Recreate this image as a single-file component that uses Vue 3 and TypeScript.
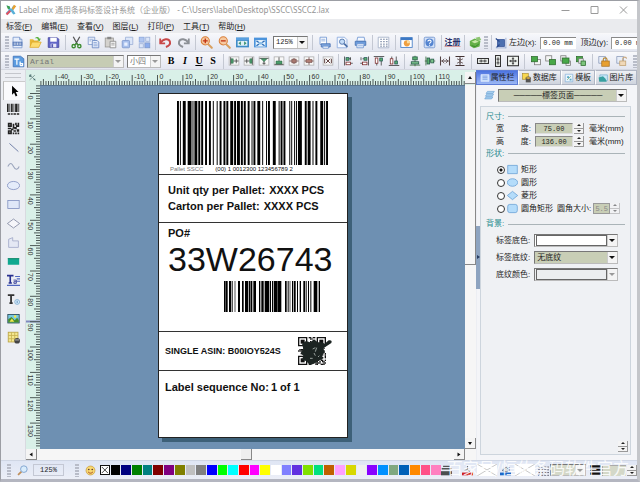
<script setup lang="ts">
import { ref } from 'vue'

type Tool = { id: string; label: string }

const frame = '<rect x="1.5" y="2.5" width="13" height="11" fill="#f8f8f8" stroke="#aaa"/>'
const lens = (sign: string) =>
  `<path d="M10 10l4.500 4.500" stroke="#d8a060" stroke-width="2.600" stroke-linecap="round"/><circle cx="6.500" cy="6" r="5" fill="#f6c9a0" stroke="#d9803c" stroke-width="1.300"/><path d="${sign}" stroke="#c03010" stroke-width="1.600" fill="none"/>`
const layers = (a: string, b: string, ax: number, bx: number) =>
  `<rect x="${ax}" y="${ax}" width="8" height="7" fill="${a}" stroke="#777"/><rect x="${bx}" y="${bx}" width="8" height="7" fill="${b}" stroke="#2c6a2c"/>`

const icons: Record<string, string> = {
  logo: '<path d="M2 2l4 1 2 4 3-5 3 1-3 5 3 5-3 1-3-4-4 4-3-2 4-4z" fill="#58b0d8"/><path d="M9 6l3-5 3 2-4 5z" fill="#e8a030"/><path d="M1 13l5-5 2 2-5 5z" fill="#e05060"/><path d="M2 2l4 1 1 3-3 1z" fill="#40a050"/>',
  doc: '<path d="M2.500 1.500h8l3 3v10h-11z" fill="#e6eefc" stroke="#7a98cc"/><path d="M10.500 1.500v3h3" fill="none" stroke="#7a98cc"/><path d="M2 7h12v5H2z" fill="#5578b8"/><path d="M4 8v3M6 8v3M8 8v3M10 8v3M12 8v3" stroke="#fff" stroke-width=".8"/>',
  open: '<path d="M1 13V4h4l1.500 1.500H12V8z" fill="#e8b838"/><path d="M3.500 7.500H15L12 14H1z" fill="#fcdc70" stroke="#d8a020" stroke-width=".8"/><path d="M7 3c2-2.500 5-2 6 .5l1.500-.5-1.500 3.500L10 5l1.300-.6C10.500 3 9 2.500 7 3z" fill="#5cb040"/>',
  save: '<path d="M1.500 2h11l2 2v10h-13z" fill="#6266c8" stroke="#4448a0"/><rect x="4" y="2" width="8" height="5" fill="#fff"/><rect x="4.500" y="9.500" width="7" height="4.500" fill="#e8e8f8"/><rect x="5.500" y="10" width="2" height="4" fill="#5055b0"/>',
  cut: '<path d="M4 1l5 9M12 1L7 10" stroke="#555" stroke-width="1.500"/><circle cx="4.500" cy="12.500" r="2" fill="none" stroke="#3c8c30" stroke-width="1.700"/><circle cx="11.500" cy="12.500" r="2" fill="none" stroke="#3c8c30" stroke-width="1.700"/><path d="M6 11l2-2 2 2" stroke="#3c8c30" fill="none" stroke-width="1.500"/>',
  copy: '<path d="M1.500 1.500h8v9h-8z" fill="#f0f4fc" stroke="#7e98c8"/><path d="M6.500 5.500h6l2 2v7h-8z" fill="#e4ecfa" stroke="#6484c0"/><path d="M8 8h4M8 10h5M8 12h5M3 4h5M3 6h2" stroke="#8aa4d4"/>',
  paste: '<rect x="1.500" y="2.500" width="10" height="11" fill="#d4d2ce" stroke="#9a9894"/><rect x="4" y="1" width="5" height="3" fill="#888"/><path d="M7.500 6.500h7v8h-7z" fill="#f6f6f6" stroke="#888"/><path d="M9 9h4M9 11h4" stroke="#999"/>',
  stack: '<path d="M5.500 1.500h9v9h-9z" fill="#dce6f8" stroke="#9cb0d8"/><rect x="1.500" y="5.500" width="9" height="9" rx="1" fill="#a8c0ec" stroke="#7c98cc"/><rect x="4" y="8" width="4" height="4" fill="#e8f0ff"/>',
  tiles: '<rect x="1.500" y="1.500" width="6" height="6" fill="#b0c6f0" stroke="#8aa6dc"/><rect x="9.500" y="1.500" width="5" height="5" fill="#dce6f8" stroke="#9cb0d8"/><rect x="1.500" y="9.500" width="5" height="5" fill="#dce6f8" stroke="#9cb0d8"/><rect x="8.500" y="8.500" width="6" height="6" fill="#8cacec" stroke="#7c98cc"/>',
  undo: '<path d="M1.500 3v6h6" fill="none" stroke="#c84848" stroke-width="2.200"/><path d="M2 8.500C5 3 12 2.500 13.500 7c.8 3.500-2 5.500-5 6.500" fill="none" stroke="#c84848" stroke-width="2.400"/>',
  redo: '<path d="M14.500 3v6h-6" fill="none" stroke="#8c9096" stroke-width="2.200"/><path d="M14 8.500C11 3 4 2.500 2.500 7c-.8 3.500 2 5.500 5 6.500" fill="none" stroke="#8c9096" stroke-width="2.400"/>',
  zoomin: lens('M3.500 6h6M6.500 3v6'),
  zoomout: lens('M3.500 6h6'),
  fitw: '<rect x="0" y="2" width="16" height="12" fill="#3e8cc8"/><path d="M0 2h16v3H0z" fill="#5aa0e0"/><rect x="2" y="6" width="12" height="6" fill="#dff0f4"/><path d="M3 9l3-2.500v5zM13 9l-3-2.500v5z" fill="#3a9070"/>',
  fitall: '<rect x="0" y="2" width="16" height="12" fill="#4c94dc"/><rect x="2" y="5" width="12" height="8" fill="#e8f4fc"/><path d="M3 6l3 2M13 6l-3 2M3 12l3-2M13 12l-3-2" stroke="#2c6cb8" stroke-width="1.500"/><rect x="6" y="7.500" width="4" height="3" fill="#88bce8"/>',
  pagesetup: '<path d="M2.500 1.500h8v9h-8z" fill="#fff" stroke="#6c94d0"/><path d="M4 4h5M4 6h5" stroke="#88a8dc"/><path d="M4 9.500h11v4H4z" fill="#7ca4dc" stroke="#4a74b4"/><path d="M6 12.500h7v2.500H6z" fill="#fff" stroke="#6c94d0"/>',
  preview: '<path d="M1.500 1.500h9l3 3v10h-12z" fill="#f4f8ff" stroke="#88a8dc"/><circle cx="7.500" cy="7" r="3.200" fill="#c4dcf8" stroke="#5a7cb0" stroke-width="1.200"/><path d="M10 9.500l4 4" stroke="#4c70a8" stroke-width="2.200"/>',
  print: '<path d="M4.500 1.500h8l1 5h-10z" fill="#f4f8ff" stroke="#6c94d0"/><path d="M1.500 6.500h13v5h-13z" fill="#6c9cdc" stroke="#4470b0"/><path d="M3.500 9.500h9l-1 5h-8z" fill="#e8f0fc" stroke="#6c94d0"/><path d="M5 12h6" stroke="#88a8dc"/>',
  grid: '<path d="M1.500 1.500h13v13h-13z" fill="#fff" stroke="#a0acc4"/><path d="M4 4h2M7.500 4h2M11 4h2M4 7h2M7.500 7h2M11 7h2M4 10h2M7.500 10h2M11 10h2M4 12.500h2M7.500 12.500h2M11 12.500h2" stroke="#6c7c9c" stroke-width="1.200"/>',
  history: '<rect x="1" y="2" width="14" height="12" fill="#fff" stroke="#3c78c4"/><path d="M1 2h14v3H1z" fill="#3c78c4"/><circle cx="8.500" cy="9" r="3.800" fill="#f0a040"/><path d="M8.500 9V5.200A3.800 3.800 0 0 1 12.300 9z" fill="#f8dca0"/>',
  help: '<rect x="1.500" y="1.500" width="13" height="13" rx="1.500" fill="#d4e2f8" stroke="#6c90cc"/><circle cx="8" cy="8" r="5" fill="#5484d0"/><path d="M6 6.800C6 4.500 10 4.500 10 6.800 10 8.200 8 8 8 9.600M8 10.700v1.300" fill="none" stroke="#fff" stroke-width="1.300"/>',
  exit: '<path d="M1 6l6-3 7 3-1 7-7 2-5-3z" fill="#64b048"/><path d="M3 7l5-2 4 2-5 2z" fill="#c8e8a8"/><path d="M8 2l5-1 2 4-4 1z" fill="#8cc470"/><path d="M3 12l5 1 4-3" stroke="#2c7c24" fill="none"/>',
  anchor: '<rect x="3.500" y="3.500" width="9" height="9" fill="#4c70b0" stroke="#2c4c94"/><path d="M1 2l5 4M2 14l4-4" stroke="#28488c" stroke-width="1.500"/><path d="M14.500 1v14M1 14.500h14" stroke="#8ca4d0"/>',
  fontfile: '<path d="M1.500 1.500h9l4 3v10h-13z" fill="#5c9ce0" stroke="#3c70b8"/><path d="M3 5h6M6 5v7M10 8v5M10 10.500h3v2.500h-3" stroke="#fff" stroke-width="1.500" fill="none"/>',
  al: frame + '<path d="M3.500 3v10M7 8h7M11 5v6" stroke="#333"/><path d="M4 5h3v6H4z" fill="#4c9c6c" stroke="#286040" stroke-width=".6"/>',
  ar: frame + '<path d="M12.500 3v10M2 8h7M5 5v6" stroke="#333"/><path d="M9 5h3v6H9z" fill="#4c9c6c" stroke="#286040" stroke-width=".6"/>',
  at: frame + '<path d="M2 4.500h12M8 8v5M6 11h4" stroke="#333"/><path d="M4 5h8L8 9z" fill="#4c9c6c" stroke="#286040" stroke-width=".6"/>',
  ab: frame + '<path d="M2 12.500h12M8 3v6" stroke="#333"/><path d="M4 12V8h8v4z" fill="#4c9c6c" stroke="#286040" stroke-width=".6"/>',
  ac: frame + '<path d="M2 8h12M8 4v8" stroke="#633"/><path d="M5 5.500h6v5H5z" fill="#a87870" stroke="#533" stroke-width=".6"/>',
  am: frame + '<path d="M2 8h12M8 3v10" stroke="#633"/><path d="M4 6h8v4H4z" fill="#b07c74" stroke="#533" stroke-width=".6"/>',
  same: frame + '<path d="M3.500 5v6M12.500 5v6M5 5l6 6M11 5l-6 6" stroke="#533" stroke-width="1.200"/>',
  dl: '<path d="M2 2v12M4 5h6M4 11h9M10 3v4" stroke="#333"/><rect x="4" y="3.500" width="4" height="3.500" fill="#5cb070" stroke="#255"/><rect x="4" y="9.500" width="6" height="3.500" fill="#fff" stroke="#722"/>',
  dr: '<path d="M14 2v12M6 5h6M3 11h9M4 3v4" stroke="#333"/><rect x="8" y="3.500" width="4" height="3.500" fill="#5cb070" stroke="#255"/><rect x="6" y="9.500" width="6" height="3.500" fill="#fff" stroke="#722"/>',
  dt: '<path d="M1 2h14M5 10v4M11 8v6" stroke="#333"/><rect x="3" y="4" width="3.500" height="7" fill="#fff" stroke="#722"/><rect x="9" y="4" width="3.500" height="4" fill="#5cb070" stroke="#255"/>',
  db: '<path d="M1 14h14M5 2v4M11 2v6" stroke="#333"/><rect x="3" y="5" width="3.500" height="7" fill="#fff" stroke="#722"/><rect x="9" y="8" width="3.500" height="4" fill="#5cb070" stroke="#255"/>',
  cv: '<path d="M8 1v14M1 13.500h14" stroke="#363"/><rect x="5" y="2.500" width="6" height="4" fill="#5cb070" stroke="#254"/><rect x="3" y="9" width="10" height="3" fill="#7cc48c" stroke="#254"/>',
  ch: '<path d="M1 8h14M2.500 2v12" stroke="#363"/><rect x="4" y="4" width="3.500" height="8" fill="#5cb070" stroke="#254"/><rect x="9" y="5.500" width="4" height="5" fill="#7cc48c" stroke="#254"/>',
  sh: '<path d="M2 2v12M14 2v12M3 8h10" stroke="#544" stroke-width="1.400"/><path d="M7 5L4 8l3 3M9 5l3 3-3 3" fill="none" stroke="#544"/>',
  sv: '<path d="M2 2h12M2 14h12M8 3v10" stroke="#433" stroke-width="1.500"/><path d="M4 5l4 2 4-2M4 11l4-2 4 2" fill="none" stroke="#544"/>',
  ew: '<rect x="0.700" y="4.700" width="14.600" height="6.600" fill="#f0f4f0" stroke="#333" stroke-width="1.400"/><path d="M3 8h10M5.500 6v4M10.500 6v4" stroke="#333" stroke-width="1.200"/>',
  eh: '<rect x="4.700" y="0.700" width="6.600" height="14.600" fill="#f0f4f0" stroke="#333" stroke-width="1.400"/><path d="M8 3v10M6 5.500h4M6 10.500h4" stroke="#333" stroke-width="1.200"/>',
  eb: '<rect x="0.700" y="1.700" width="14.600" height="12.600" fill="#f0f4f0" stroke="#333" stroke-width="1.400"/><path d="M8 3v10M3 8h10M6.500 5h3M6.500 11h3M5 6.500v3M11 6.500v3" stroke="#333" stroke-width="1.200"/>',
  l1: layers('#f4f4f4', '#48a848', 6, 2),
  l2: layers('#f4f4f4', '#48a848', 1, 6),
  l3: '<rect x="1" y="1" width="7" height="7" fill="#eee" stroke="#777"/><rect x="8" y="8" width="6" height="6" fill="#eee" stroke="#777"/><rect x="3" y="4" width="9" height="7" fill="#48a848" stroke="#2c6a2c"/>',
  l4: '<rect x="2" y="2" width="8" height="7" fill="#48a848" stroke="#2c6a2c"/><rect x="5" y="5" width="6" height="6" fill="#eee" stroke="#777"/><rect x="8" y="8" width="6" height="6" fill="#7cc47c" stroke="#2c6a2c"/>',
  lock: '<path d="M1 2h9v9H1z" fill="#e8eef8" stroke="#8898b8"/><path d="M7 8V6c0-3 5-3 5 0v2" fill="none" stroke="#b88830" stroke-width="1.500"/><rect x="5" y="8" width="10" height="7" fill="#e8a030" stroke="#a87020"/>',
  unlock: '<path d="M1 2h9v9H1z" fill="#e8eef8" stroke="#8898b8"/><path d="M9 8V5c0-3 5-3 5 0" fill="none" stroke="#c8a880" stroke-width="1.500"/><rect x="5" y="8" width="8" height="6" fill="#f0d8b8" stroke="#c0a070"/>',
  pointer: '<path d="M5 1v11l2.500-2.500L9.500 14l2-1-2-4.500H13z" fill="#000"/>',
  barcode: '<path d="M0 1h2v10H0zM3 1h1v10H3zM5 1h2v10H5zM8 1h1v10H8zM10 1h3v10h-3zM14 1h1v10h-1z" fill="#222"/><path d="M1 13.500h3M5 13.500h2M8 13.500h3M12 13.500h3" stroke="#222" stroke-width="2"/>',
  qr: '<path d="M1 1h5v5H1zM10 1h2v3h-2zM13 1h2v5h-2zM1 10h5v5H1zM7 2h2v6H7zM9 6h3v3H9zM1 7h4v2H1zM8 10h3v2H8zM12 9h3v3h-3zM10 13h2v2h-2zM13 13h2v2h-2zM7 13h2v2H7zM11 4h2v2h-2zM5 8h3v2H5z" fill="#222"/><path d="M3 3h1v1H3zM3 12h1v1H3z" fill="#fff"/>',
  line: '<path d="M3 3l11 10" stroke="#7080a8" stroke-width="1.200"/>',
  curve: '<path d="M1 8c3-6 5-4 7 0s5 5 7 0" fill="none" stroke="#9aa4bc" stroke-width="1.300"/>',
  ellipse: '<ellipse cx="8" cy="8" rx="7.500" ry="5" fill="#e4ecfa" stroke="#8090c0"/>',
  rect: '<rect x="1" y="3" width="14" height="10" fill="#dfe7f8" stroke="#8090c0"/>',
  diamond: '<path d="M8 2.500L15.500 8 8 13.500.5 8z" fill="#f6f6fa" stroke="#8088a0"/>',
  polygon: '<path d="M2 4l5-2v4h7v8H2z" fill="#e4e8f4" stroke="#a0a8c8"/>',
  fill: '<rect x="1" y="4" width="14" height="8" fill="#10a890"/><path d="M1 4.500h14" stroke="#108060"/>',
  richtext: '<path d="M0 2h8M4 2v9M2 11h4" stroke="#283090" stroke-width="2" fill="none"/><path d="M8 7.500h3.500v4H8.500v-2h3" stroke="#283090" fill="none"/><path d="M10 3h6M12 6h4M12 9h4M0 14h16" stroke="#5068c0" stroke-width="1.300"/>',
  texti: '<path d="M1 2.500h8M5 2.500v10M3 12.500h4" stroke="#333" stroke-width="2.200"/><circle cx="12.500" cy="11" r="3" fill="#d8ecfc" stroke="#7cacd0"/><path d="M12.500 9.500v3" stroke="#4880b0"/>',
  picture: '<rect x="1" y="3" width="14" height="10.500" fill="#78c8e0" stroke="#245"/><path d="M1.500 13V9l4-3 4 4 3-3 2 3v3z" fill="#488c28"/><circle cx="10" cy="5.500" r="1.500" fill="#f8e840"/><path d="M3 12l3-4 3 4z" fill="#f0e850"/>',
  table: '<rect x="1.500" y="1.500" width="12" height="12" fill="#f4e890" stroke="#b8a040"/><path d="M1.500 5.500h12M1.500 9.500h12M5.500 1.500v12M9.500 1.500v12" stroke="#c8b050"/><ellipse cx="12.500" cy="12" rx="3.500" ry="3.500" fill="#444"/><path d="M10 11h5" stroke="#ccc"/>',
  origin: '<path d="M2 3h3v3H2zM10 10h3v3h-3z" fill="#688"/><path d="M3 12L12 4M8 8l5 5M5 2v4M2 6h5" stroke="#355"/>',
  page: '<path d="M5 2h10l-2 3H3zM4 6h10l-2 3H2zM3 10h10l-2 3H1z" fill="#a8d0f0" stroke="#5c98d0" stroke-width=".8"/>',
  props: '<path d="M1.500 2.500h13v11h-13z" fill="#cfe2fc" stroke="#dfe9ff"/><path d="M4 5h8M4 7.500h8M4 10h8" stroke="#5c84d8"/>',
  data: '<rect x="1" y="1" width="9" height="9" fill="#f8d850" stroke="#a88820"/><path d="M6 8h8v7H6z" fill="#555"/><ellipse cx="10" cy="8" rx="4" ry="1.800" fill="#f8c040" stroke="#444"/>',
  template: '<path d="M2 2h12v12H2z" fill="#e8f4fc" stroke="#7cacd8"/><path d="M5 5h3v3H5zM9 9h3v3H9z" fill="#58a8c8"/><path d="M5 11l6-6" stroke="#60a060"/>',
  gallery: '<path d="M3 3h12v9H3z" fill="#c8e8f8" stroke="#68a8c8"/><path d="M1 7l7-2 4 4 2 5H2z" fill="#38a0a0"/>',
  magnifier: '<path d="M1.500 14.500l5-5" stroke="#c0905c" stroke-width="2.600"/><circle cx="10" cy="6" r="4.800" fill="#d8ecfc" stroke="#7ca0cc" stroke-width="1.300"/>',
  face: '<circle cx="8" cy="8" r="6.500" fill="#f8d870" stroke="#c89838"/><circle cx="5.500" cy="6.500" r="1.200" fill="#533"/><circle cx="10.500" cy="6.500" r="1.200" fill="#533"/><path d="M4.500 10c2 2.500 5 2.500 7 0" fill="none" stroke="#a04020" stroke-width="1.300"/>',
  weights: '<path d="M3 2h10M1 5.500h14" stroke="#555" stroke-width="2"/><path d="M0 9h16v6H0z" fill="#4c5050"/>',
  pen: '<path d="M8 1v6l4 3" fill="none" stroke="#555" stroke-width="1.200"/><path d="M3 8l4-3 4 4z" fill="#aaa"/><path d="M0 11h16v4H0z" fill="#d02020"/>',
  bucket: '<path d="M3 8l6-5 4 4-3 3z" fill="#ddd" stroke="#567"/><path d="M13 3v6" stroke="#3c70c0" stroke-width="2"/><path d="M0 11h16v4H0z" fill="#1c68c8"/>',
  dashes: '<path d="M0 3h16M0 7h16M0 11h16M0 15h16" stroke="#556" stroke-width="1.300" stroke-dasharray="3 1.500"/>',
  rules: '<path d="M0 2h16M0 7h16M0 12.500h16" stroke="#111" stroke-width="3"/>',
}

const menus = ['标签(F)', '编辑(E)', '查看(V)', '图层(L)', '打印(P)', '工具(T)', '帮助(H)'].map(m => ({
  name: m.slice(0, 3),
  key: m.slice(3, 4),
}))

const group = (...pairs: string[]): Tool[] => pairs.map(p => {
  const [id, label] = p.split(':')
  return { id, label }
})
const fileTools = group('doc:新建', 'open:打开', 'save:保存')
const editTools = group('cut:剪切', 'copy:复制', 'paste:粘贴', 'stack:克隆', 'tiles:阵列')
const undoTools = group('undo:撤销', 'redo:重做')
const zoomTools = group('zoomin:放大', 'zoomout:缩小', 'fitw:适合宽度', 'fitall:适合页面')
const printTools = group('pagesetup:页面设置', 'preview:预览', 'print:打印')
const miscTools = group('grid:网格', 'history:历史', 'help:帮助')
const arrange = [
  { wide: false, tools: group('al:左对齐', 'ar:右对齐', 'at:上对齐', 'ab:下对齐', 'ac:水平居中', 'am:垂直居中') },
  { wide: false, tools: group('same:页面居中') },
  { wide: false, tools: group('dl:靠左', 'dr:靠右', 'dt:靠上', 'db:靠下') },
  { wide: true, tools: group('cv:中线对齐', 'ch:横线对齐', 'sh:水平等距', 'sv:垂直等距') },
  { wide: true, tools: group('ew:等宽', 'eh:等高', 'eb:等大小') },
  { wide: true, tools: group('l1:置顶', 'l2:置底', 'l3:上移', 'l4:下移') },
]
const lockTools = group('lock:锁定', 'unlock:解锁')
const drawTools = group('pointer:选择', 'barcode:条码', 'qr:二维码', 'line:直线', 'curve:曲线', 'ellipse:椭圆', 'rect:矩形', 'diamond:菱形', 'polygon:多边形', 'fill:填充', 'richtext:段落', 'texti:文本', 'picture:图片', 'table:表格')
const tabs = group('props:属性栏', 'data:数据库', 'template:模板', 'gallery:图片库')

// Rulers: 10 mm spans 25.35 px at 125 % zoom.
const mm = 2.535
const ticks = (origin: number, from: number, to: number, lastLabel: number) => {
  const out: { pos: number; len: number; text: string }[] = []
  for (let v = from; v <= to; v++) {
    out.push({
      pos: Math.round((origin + v * mm) * 10) / 10,
      len: v % 10 === 0 ? 10 : v % 5 === 0 ? 6 : 4,
      text: v % 10 === 0 && v <= lastLabel ? String(v) : '',
    })
  }
  return out
}
const hTicks = ticks(117.5, -46, 122, 110)
const vTicks = ticks(8.5, -3, 139, 130)

// Code 128 symbols: bar and space widths for values 0 to 105.
const table = ('212222 222122 222221 121223 121322 131222 122213 122312 132212 221213 221312 231212 112232 122132 122231 113222 123122 123221 223211 221132 221231 213212 223112 312131 311222 321122 321221 312212 322112 322211 212123 212321 232121 111323 131123 131321 112313 132113 132311 211313 231113 231311 112133 112331 132131 113123 113321 133121 313121 211331 231131 213113 213311 213131 311123 311321 331121 312113 312311 332111 314111 221411 431111 111224 111422 121124 121421 141122 141221 112214 112412 122114 122411 142112 142211 241211 221114 413111 241112 134111 111242 121142 121241 114212 124112 124211 411212 421112 421211 212141 214121 412121 111143 111341 131141 114113 114311 411113 411311 113141 114131 311141 411131 211412 211214 211232').split(' ')
function encode(values: number[]) {
  const check = values.reduce((sum, v, i) => sum + v * Math.max(i, 1), 0) % 103
  const widths = [...values, check].map(v => table[v]).join('') + '2331112'
  const bars: { x: number; w: number }[] = []
  let x = 0
  widths.split('').forEach((d, i) => {
    if (i % 2 === 0) bars.push({ x, w: Number(d) })
    x += Number(d)
  })
  return { bars, total: x }
}
const sscc = encode([105, 102, 0, 10, 1, 23, 0, 12, 34, 56, 78, 92])
const poBars = [[0, 5], [6, 5], [15, 7], [25, 2], [32, 2], [42, 6], [54, 5], [63, 10], [75, 4], [80, 5], [88, 8], [105, 4], [112, 7], [122, 13], [137, 4], [144, 4], [150, 9], [160, 12], [183, 5], [191, 3], [197, 2], [204, 4], [210, 5], [219, 3], [227, 4], [238, 6], [247, 2], [252, 3], [259, 3], [269, 10], [281, 2], [285, 3]]

const qrCells: { x: number; y: number }[] = []
let seed = 7
for (let y = 0; y < 21; y++) {
  for (let x = 0; x < 21; x++) {
    seed = (seed * 69069 + 12345) % 2147483648
    const corner = (x < 8 && y < 8) || (x > 12 && y < 8) || (x < 8 && y > 12)
    if (!corner && seed > 1000000000) qrCells.push({ x, y })
  }
}

const colours = ['#000', '#000080', '#008000', '#008080', '#800000', '#800080', '#808000', '#c0c0c0', '#808080', '#00f', '#0f0', '#0ff', '#f00', '#f0f', '#ff0', '#fff', '#8080ff', '#6030e0', '#80e000', '#00e080', '#c06000', '#ffa0ff', '#d8d800', '#f0f0f0', '#8800ff', '#0090ff', '#80a880', '#0060b8', '#ff8800', '#ff5088', '#ff80c0']

const shape = ref('rect')
const width = ref('75.00')
const height = ref('136.00')
const radius = ref('5.5')
const shapes = [
  { id: 'rect', label: '矩形', d: 'M1 2h14v12H1z' },
  { id: 'round', label: '圆形', d: 'M0.500 8a7.500 5.500 0 1 0 15 0a7.500 5.500 0 1 0 -15 0z' },
  { id: 'diamond', label: '菱形', d: 'M8 2l7.500 6L8 14 .5 8z' },
  { id: 'rounded', label: '圆角矩形', d: 'M4 2h8q3 0 3 3v6q0 3-3 3H4q-3 0-3-3V5q0-3 3-3z' },
]
</script>

<template>
  <div class="app">
    <header class="title">
      <svg class="logo" viewBox="0 0 16 16" v-html="icons.logo" />
      <h1>Label mx 通用条码标签设计系统（企业版） - C:\Users\label\Desktop\SSCC\SSCC2.lax</h1>
      <div class="winbtns">
        <button aria-label="最小化"><svg viewBox="0 0 10 10"><path d="M1 5.500h8" /></svg></button>
        <button aria-label="最大化"><svg viewBox="0 0 10 10"><path d="M1.500 1.500h7v7h-7z" /></svg></button>
        <button aria-label="关闭"><svg viewBox="0 0 10 10"><path d="M1.500 1.500l7 7M8.500 1.500l-7 7" /></svg></button>
      </div>
    </header>

    <nav class="menu">
      <button v-for="m in menus" :key="m.key">{{ m.name }}<u>{{ m.key }}</u>)</button>
    </nav>

    <div class="bar">
      <i class="grip" />
      <div class="set spaced">
        <button v-for="t in fileTools" :key="t.id" :aria-label="t.label"><svg viewBox="0 0 16 16" v-html="icons[t.id]" /></button>
      </div>
      <i class="sep" />
      <div class="set">
        <button v-for="t in editTools" :key="t.id" :aria-label="t.label"><svg viewBox="0 0 16 16" v-html="icons[t.id]" /></button>
      </div>
      <i class="sep narrow" />
      <div class="set spaced">
        <button v-for="t in undoTools" :key="t.id" :aria-label="t.label"><svg viewBox="0 0 16 16" v-html="icons[t.id]" /></button>
      </div>
      <i class="sep" />
      <div class="set spaced">
        <button v-for="t in zoomTools" :key="t.id" :aria-label="t.label"><svg viewBox="0 0 16 16" v-html="icons[t.id]" /></button>
      </div>
      <span class="pick zoom"><select aria-label="缩放"><option>125%</option></select></span>
      <i class="sep wide" />
      <div class="set spaced">
        <button v-for="t in printTools" :key="t.id" :aria-label="t.label"><svg viewBox="0 0 16 16" v-html="icons[t.id]" /></button>
      </div>
      <template v-for="t in miscTools" :key="t.id">
        <i class="sep" />
        <button :aria-label="t.label"><svg viewBox="0 0 16 16" v-html="icons[t.id]" /></button>
      </template>
      <i class="sep" />
      <button class="register">注册</button>
      <i class="sep" />
      <button aria-label="退出"><svg viewBox="0 0 16 16" v-html="icons.exit" /></button>
      <i class="grip" />
      <i class="sep narrow" />
      <svg class="anchor" viewBox="0 0 16 16" v-html="icons.anchor" />
      <label class="coord">左边(x): <input value="0.00 mm"></label>
      <label class="coord">顶边(y): <input value="0.00 mm"></label>
    </div>

    <div class="bar second">
      <i class="grip" />
      <svg class="fontfile" viewBox="0 0 16 16" v-html="icons.fontfile" />
      <span class="pick family"><select aria-label="字体"><option>Arial</option></select></span>
      <span class="pick size"><select aria-label="字号"><option>小四</option></select></span>
      <div class="set styles">
        <button aria-label="粗体"><b>B</b></button>
        <button aria-label="斜体"><b><em>I</em></b></button>
        <button aria-label="下划线"><b><u>U</u></b></button>
        <button aria-label="删除线"><b>S</b></button>
      </div>
      <i class="sep" />
      <template v-for="(g, n) in arrange" :key="n">
        <div class="set small">
          <button v-for="t in g.tools" :key="t.id" :aria-label="t.label"><svg viewBox="0 0 16 16" v-html="icons[t.id]" /></button>
        </div>
        <i class="sep" :class="{ wide: g.wide, narrow: n === 0 }" />
      </template>
      <div class="set small locks">
        <button v-for="t in lockTools" :key="t.id" :aria-label="t.label"><svg viewBox="0 0 16 16" v-html="icons[t.id]" /></button>
      </div>
      <i class="grip end" />
    </div>

    <main>
      <aside class="tools">
        <i class="handle" />
        <button v-for="(t, n) in drawTools" :key="t.id" :class="{ on: n === 0 }" :aria-label="t.label"><svg viewBox="0 0 16 16" v-html="icons[t.id]" /></button>
      </aside>

      <section class="work">
        <div class="corner"><svg viewBox="0 0 16 16" v-html="icons.origin" /></div>
        <svg class="ruler">
          <g v-for="t in hTicks" :key="t.pos">
            <path :d="`M${t.pos} ${15 - t.len}V15`" />
            <text v-if="t.text" :x="t.pos + 2" y="9">{{ t.text }}</text>
          </g>
        </svg>
        <div class="ruler-end" />
        <svg class="ruler">
          <path class="mark" d="M0 236.500h14" />
          <g v-for="t in vTicks" :key="t.pos">
            <path :d="`M${14 - t.len} ${t.pos}H14`" />
            <text v-if="t.text" :transform="`translate(2 ${t.pos + 2}) rotate(90)`">{{ t.text }}</text>
          </g>
        </svg>

        <div class="canvas">
          <article class="sheet">
            <section class="s-sscc">
              <svg class="code" :viewBox="`0 0 ${sscc.total} 64`" preserveAspectRatio="none">
                <rect v-for="b in sscc.bars" :key="b.x" :x="b.x" y="0" :width="b.w" height="64" />
              </svg>
              <p><span class="faint">Pallet SSCC</span><span>(00) 1 0012300 123456789 2</span></p>
            </section>
            <section class="s-qty">
              <p><span>Unit qty per Pallet:</span><span>XXXX PCS</span></p>
              <p><span>Carton per Pallet:</span><span>XXXX PCS</span></p>
            </section>
            <section class="s-po">
              <p>PO#</p>
              <strong>33W26743</strong>
              <svg class="code" viewBox="0 0 288 31" preserveAspectRatio="none">
                <rect v-for="b in poBars" :key="b[0]" :x="b[0]" y="0" :width="b[1]" height="31" />
              </svg>
            </section>
            <section class="s-asin">
              <p>SINGLE ASIN: B00IOY524S</p>
              <svg class="qr" viewBox="0 0 27 21">
                <rect v-for="c in qrCells" :key="c.x * 30 + c.y" :x="c.x" :y="c.y" width="1" height="1" />
                <g v-for="p in ['0 0', '14 0', '0 14']" :key="p" :transform="`translate(${p})`">
                  <path d="M0 0h7v7H0zM1 1v5h5V1z" fill-rule="evenodd" /><rect x="2" y="2" width="3" height="3" />
                </g>
                <path class="scribble" d="M3 5L6 3 9 4 12 2 15 4 18 4 20 5 23 2.500Q26 2 25 4.500L19 8.500 20 11 18 14 19 16 15 18 12 20 9 21 6 18 3 17 4 14 2 12 4 9z" />
                <path class="nick" d="M11 9l2-1M12 12l1 2M9 16h2M14 8l-1 3M15 15l1-1" />
              </svg>
            </section>
            <section class="s-seq"><p>Label sequence No:</p><p>1 of 1</p></section>
          </article>
        </div>

        <div class="vscroll"><button class="up" aria-label="向上" /><i class="thumb" /><button class="down" aria-label="向下" /></div>
        <div class="hscroll"><button class="left" aria-label="向左" /><i class="thumb" /><button class="right" aria-label="向右" /></div>
      </section>

      <i class="splitter"><b /></i>

      <aside class="panel">
        <div class="tabs">
          <button v-for="(t, n) in tabs" :key="t.id" :class="{ on: n === 0 }"><svg viewBox="0 0 16 16" v-html="icons[t.id]" />{{ t.label }}</button>
        </div>
        <div class="target">
          <svg viewBox="0 0 16 16" v-html="icons.page" />
          <span class="pick"><select aria-label="对象"><option>─────標签页面─────</option></select></span>
        </div>
        <form class="props" @submit.prevent>
          <h2>尺寸:</h2>
          <div class="dim">
            <label for="w"><span>宽</span><span>度:</span></label>
            <input id="w" v-model="width"><i class="spin" /><span>毫米(mm)</span>
          </div>
          <div class="dim">
            <label for="h"><span>高</span><span>度:</span></label>
            <input id="h" v-model="height"><i class="spin" /><span>毫米(mm)</span>
          </div>
          <h2>形状:</h2>
          <div v-for="s in shapes" :key="s.id" class="shape">
            <input :id="s.id" v-model="shape" type="radio" name="shape" :value="s.id">
            <label :for="s.id"><svg viewBox="0 0 16 16"><path :d="s.d" /></svg>{{ s.label }}</label>
            <template v-if="s.id === 'rounded'">
              <label class="radius" for="r">圆角大小:</label>
              <input id="r" v-model="radius" class="num" disabled><i class="spin off" />
            </template>
          </div>
          <h2 class="bg">背景:</h2>
          <div class="fillrow"><label for="f1">标签底色:</label><span class="pick inset"><select id="f1"><option /></select></span></div>
          <div class="fillrow"><label for="f2">标签底纹:</label><span class="pick olive"><select id="f2"><option>无底纹</option></select></span></div>
          <div class="fillrow"><label for="f3">底纹颜色:</label><span class="pick inset off"><select id="f3" disabled><option /></select></span></div>
          <i class="spin corner-spin" />
        </form>
      </aside>
    </main>

    <footer>
      <i class="grip" />
      <svg class="ic" viewBox="0 0 16 16" v-html="icons.magnifier" />
      <output>125%</output>
      <i class="grip second-grip" />
      <svg class="ic" viewBox="0 0 16 16" v-html="icons.face" />
      <div class="swatches">
        <button class="none" aria-label="无颜色"><svg viewBox="0 0 10 10"><path d="M1 1l8 8M9 1l-8 8" /></svg></button>
        <button v-for="c in colours" :key="c" :style="{ background: c }" :aria-label="c" />
      </div>
      <svg class="ic tail" viewBox="0 0 16 16" v-html="icons.weights" />
      <svg class="ic pen" viewBox="0 0 16 16" v-html="icons.pen" />
      <svg class="cross" viewBox="0 0 20 12" preserveAspectRatio="none"><path d="M0 0l20 12M20 0L0 12" /></svg>
      <svg class="ic" viewBox="0 0 16 16" v-html="icons.bucket" />
      <svg class="cross" viewBox="0 0 20 12" preserveAspectRatio="none"><path d="M0 0l20 12M20 0L0 12" /></svg>
      <svg class="ic" viewBox="0 0 16 16" v-html="icons.dashes" />
      <span class="pick dash off"><select aria-label="线型"><option /></select></span>
      <svg class="ic" viewBox="0 0 16 16" v-html="icons.rules" />
      <input class="thick" aria-label="线宽"><i class="spin" />
      <span class="watermark">百家号/恒佑条码软件官方</span>
    </footer>
  </div>
</template>

<style>
body { margin: 0; background: #e9ebef; }
</style>

<style scoped>
* { box-sizing: border-box; }
.app {
  height: 100vh; display: flex; flex-direction: column; overflow: hidden;
  border: solid #9c9ea4; border-width: 1px 3px 3px 1px; border-right-color: #c4c6ca; border-bottom-color: #b4b6c0;
  background: #eceef3; color: #1c1c1c; font: 8px/12px "Liberation Sans", "Noto Sans CJK SC", sans-serif;
}
button, input, select { font: inherit; color: inherit; margin: 0; padding: 0; border: 0; border-radius: 0; background: none; }
svg { display: block; }
p, h1, h2 { margin: 0; font: inherit; }
i { display: block; flex: none; }

.title { flex: 0 0 18px; display: flex; align-items: center; background: #fff; padding-left: 4px; }
.logo { width: 12px; height: 12px; margin-right: 2px; }
.title h1 { flex: 1; color: #949494; font-family: "Noto Sans", "Noto Sans CJK SC", sans-serif; white-space: nowrap; }
.winbtns { display: flex; gap: 18px; padding-right: 8px; }
.winbtns svg { width: 11px; height: 10px; fill: none; stroke: #9a9a9a; }

.menu { flex: 0 0 14px; display: flex; align-items: center; gap: 9px; padding: 1px 0 0 5px; background: #eaebee; }
.menu button { white-space: nowrap; }

.bar { flex: 0 0 19px; display: flex; align-items: center; padding-left: 4px; background: linear-gradient(#f6f7fb, #e3e6f0); border-top: 1px solid #f8f8fa; border-bottom: 1px solid #d4d7e0; overflow: hidden; }
.second { flex-basis: 18px; }
.grip { width: 4px; height: 13px; background: radial-gradient(circle at 1px 1px, #b8bcc8 1px, transparent 1px) 0 0 / 2px 3px; }
.bar > .grip + .sep { margin-left: 1px; }
.set { display: flex; flex: none; }
.spaced { gap: 1px; }
.bar button { flex: none; width: 17px; height: 16px; display: grid; place-items: center; }
.bar button svg { width: 13px; height: 13px; }
.sep { width: 6px; height: 15px; background: linear-gradient(90deg, transparent 50%, #c4c8d2 50%, #c4c8d2 66%, transparent 66%); }
.sep.narrow { width: 4px; }
.sep.wide { width: 8px; }
.bar .register { font-weight: 700; color: #283068; white-space: nowrap; text-decoration: underline #d8a0a0; }
.anchor { flex: none; width: 12px; height: 12px; margin: 0 2px; }
.coord { flex: none; display: flex; align-items: center; gap: 3px; margin-right: 5px; white-space: nowrap; }
.coord input { width: 36px; height: 12px; background: #fff; border-top: 1px solid #888; border-left: 1px solid #999; text-align: center; font-family: "Liberation Mono", monospace; font-size: 7px; }

.pick { position: relative; flex: none; display: block; height: 13px; background: #fff; border: 1px solid #777; border-right-color: #bbb; border-bottom-color: #bbb; }
.pick select { appearance: none; display: block; width: 100%; height: 11px; padding-left: 2px; line-height: 11px; opacity: 1; }
.pick::after { content: ""; position: absolute; top: 0; bottom: 0; right: 0; width: 9px; background: #f4f4f4; border-left: 1px solid #ccc; pointer-events: none; }
.pick::before { content: ""; position: absolute; z-index: 1; right: 2px; top: 4px; border: 3px solid transparent; border-top-color: #111; border-bottom: 0; pointer-events: none; }
.pick.off::before { border-top-color: #999; }
.zoom { width: 35px; margin-left: 4px; font-family: "Liberation Mono", monospace; font-size: 7px; }
.fontfile { flex: none; width: 13px; height: 13px; margin: 0 2px 0 3px; }
.family { width: 97px; background: #c6ccb4; color: #777; font-family: "Liberation Mono", monospace; }
.size { width: 34px; margin: 0 3px; color: #777; }
.family::before, .size::before { border-top-color: #999; }
.bar .styles button { width: 14px; font: 700 10px/14px "Liberation Serif", serif; color: #000; }
.bar .small button { width: 15px; }
.bar .small svg { width: 12px; height: 12px; }
.bar .locks { gap: 3px; }
.end { margin-left: auto; }

main { flex: 1; min-height: 0; display: flex; }
.tools { flex: 0 0 25px; background: #eceef3; border-right: 1px solid #d8dae0; display: flex; flex-direction: column; }
.handle { height: 5px; margin: 3px 4px; border: solid #c4c6cc; border-width: 1px 0; }
.tools button { height: 19px; display: grid; place-items: center; }
.tools svg { width: 13px; height: 13px; }
.tools .on { background: #fafafc; border-left: 1px solid #bbb; border-top: 1px solid #ccc; margin-left: 2px; }

.work { flex: 1; min-width: 0; display: grid; grid-template: 15px 1fr 11px / 14px 1fr 11px; }
.corner, .ruler, .ruler-end { background: #d9f0e8; }
.corner svg { width: 9px; height: 9px; margin: 3px 0 0 2px; }
.ruler { width: 100%; height: 100%; min-height: 0; overflow: hidden; stroke: #4c5856; stroke-width: 1; }
.ruler text { stroke: none; fill: #333; font: 7px "Liberation Sans", sans-serif; }
.ruler .mark { stroke: #8088c0; stroke-width: 2; }
.canvas { background: #6e90b2; padding: 7px 0 0 118px; min-height: 0; overflow: hidden; border-top: 1px solid #58748f; }
.sheet { width: 190px; background: #fff; border: 1px solid #222; box-shadow: 4px 4px 0 #3d6078; color: #111; font: 700 11px/16px "Liberation Sans", Arial, sans-serif; white-space: nowrap; }
.sheet section + section { border-top: 1px solid #333; }
.code { fill: #000; }
.s-sscc { height: 80px; padding: 7px 18px 0; }
.s-sscc .code { width: 151px; height: 64px; }
.s-sscc p { display: flex; gap: 12px; margin-left: -7px; font-weight: 400; font-size: 6px; line-height: 8px; }
.faint { color: #777; }
.s-qty { height: 48px; padding: 7px 9px 0; }
.s-qty p { display: flex; gap: 4px; }
.s-po { height: 109px; padding: 3px 9px 0; }
.s-po p { line-height: 14px; }
.s-po strong { display: block; font-weight: 400; font-size: 34px; line-height: 38px; }
.s-po .code { width: 96px; height: 31px; margin: 3px 0 0 56px; }
.s-asin { height: 39px; padding-left: 6px; display: flex; align-items: center; gap: 17px; }
.s-asin p { font-size: 9px; }
.qr { width: 36px; height: 28px; fill: #111; }
.qr .scribble { fill: #1c2422; }
.qr .nick { stroke: #b8c0bc; stroke-width: .6; fill: none; }
.s-seq { height: 67px; padding: 8px 6px 0; display: flex; gap: 2px; }

.vscroll, .hscroll { background: #f6f6f6; display: flex; }
.vscroll { flex-direction: column; }
.hscroll { grid-column: 1 / -1; }
.vscroll button, .hscroll button { position: relative; flex: none; width: 11px; height: 11px; background: #f4f4f4; border: solid #888; border-width: 0 1px 1px 0; }
.vscroll button::after, .hscroll button::after { content: ""; display: block; width: 0; margin: 0 auto; border: 2px solid transparent; border-bottom: 3px solid #111; border-top: 0; }
.down::after { transform: rotate(180deg); }
.left::after { transform: rotate(-90deg); }
.right::after { transform: rotate(90deg); }
.vscroll .up { margin-top: -13px; height: 12px; }
.vscroll .thumb { flex: 0 0 181px; border: solid #888; border-width: 0 1px 1px 0; }
.vscroll .down { margin-top: auto; }
.hscroll .thumb { width: 11px; margin-left: 204px; background: #eee; border: solid #888; border-width: 0 1px 1px 0; }
.hscroll .right { margin: 0 11px 0 auto; }

.splitter { position: relative; z-index: 1; width: 4px; align-self: center; height: 63px; background: #8ea4c0; display: grid; place-items: center; margin-top: -16px; }
.splitter b { border: 2px solid transparent; border-left: 3px solid #283c60; border-right: 0; }
.panel { flex: 0 0 160px; margin-left: -3px; padding-left: 1px; display: flex; flex-direction: column; background: #f4f5f8; }
.tabs { display: flex; margin-left: -2px; height: 15px; background: #e2e6ee; }
.tabs button { flex: 1 1 auto; display: flex; align-items: center; justify-content: center; gap: 1px; white-space: nowrap; background: linear-gradient(#eef0f4, #cfd4de); border: 1px solid #b0b6c4; border-left-color: #fff; }
.tabs .on { background: linear-gradient(#4c74e0, #9cb8f4); border-color: #5c7cd8; }
.tabs svg { width: 10px; height: 10px; }
.target { display: flex; gap: 3px; padding: 4px 10px 4px 6px; align-items: center; }
.target svg { width: 11px; height: 11px; }
.target .pick { flex: 1; background: #c8ceb6; overflow: hidden; }
.target select { padding-left: 1px; text-align: center; padding-right: 10px; }
.props { flex: 1; position: relative; margin: 0 6px 5px 2px; padding: 4px 5px; background: #eff1f4; border: 1px solid #cdd5dd; }
.props h2 { display: flex; align-items: center; gap: 4px; color: #2a8c90; height: 11px; }
.props h2::after { content: ""; flex: 1; height: 1px; background: #aab4b8; }
.props > .bg { height: 12px; margin: 3px 0 2px; }
.dim { display: flex; align-items: center; height: 13px; padding-left: 10px; gap: 1px; }
.dim label { width: 35px; display: flex; justify-content: space-between; margin-right: 3px; }
.dim input { width: 38px; height: 11px; background: #c8ceb6; border: 1px solid #888; border-right-color: #ddd; border-bottom-color: #ddd; text-align: center; font-family: "Liberation Mono", monospace; font-size: 7px; }
.spin { position: relative; width: 10px; height: 11px; background: linear-gradient(#f4f4f4 5px, #999 5px, #999 6px, #f4f4f4 6px); border: solid #999; border-width: 0 1px 1px 0; }
.spin::before, .spin::after { content: ""; position: absolute; left: 3px; border: 2px solid transparent; }
.spin::before { top: 1px; border-top: 0; border-bottom-color: #222; }
.spin::after { bottom: 1px; border-bottom: 0; border-top-color: #222; }
.spin.off { opacity: .5; }
.dim > span { margin-left: 4px; }
.shape { display: flex; align-items: center; height: 13px; padding-left: 11px; }
h2 + .shape { margin-top: 4px; }
.shape input[type="radio"] { appearance: none; width: 8px; height: 8px; border: 1px solid #333; border-radius: 50%; background: #fff; margin-right: 2px; }
.shape input[type="radio"]:checked { background: radial-gradient(#111 0 1px, #fff 2px); }
.shape label { display: flex; align-items: center; gap: 3px; white-space: nowrap; }
.shape svg { width: 11px; height: 11px; fill: #b4dcfa; stroke: #5c98d0; }
.shape .radius { margin: 0 2px 0 4px; }
.num { width: 17px; height: 11px; background: #c8ceb6; border: 1px solid #999; color: #888; text-align: center; font-family: "Liberation Mono", monospace; font-size: 7px; }
.fillrow { display: flex; align-items: center; gap: 4px; height: 17px; padding-left: 10px; }
.fillrow label { flex: 0 0 34px; white-space: nowrap; }
.fillrow .pick { flex: 0 0 84px; }
.fillrow .olive { background: #c8ceb6; }
.inset select { width: calc(100% - 11px); margin-left: 1px; border: 1px solid #666; }
.inset.off { background: #eceef0; }
.corner-spin { position: absolute; right: 2px; bottom: 2px; }

footer { position: relative; flex: 0 0 19px; display: flex; align-items: center; padding-left: 6px; background: linear-gradient(#dfe6f4, #eceff7); border-top: 1px solid #cfd6e4; }
.ic { flex: none; width: 11px; height: 11px; }
footer > .grip { margin-right: 6px; }
output { width: 31px; height: 12px; margin: 0 11px 0 5px; border: 1px solid #c4c8d4; text-align: center; line-height: 10px; font-family: "Liberation Mono", monospace; font-size: 7px; }
.second-grip { margin-right: 7px; }
.swatches { flex: 1; display: grid; grid-template-columns: repeat(32, minmax(0, 1fr)); gap: 1px; margin: 0 0 0 4px; }
.swatches button { height: 10px; }
.swatches .none { border: 1px solid #111; background: #fff; }
.none svg { width: 100%; height: 100%; stroke: #111; }
.tail { margin-right: 10px; }
.cross { flex: none; width: 20px; height: 12px; margin: 0 3px 0 4px; background: #fff; fill: none; stroke: #bbb; stroke-width: .8; }
.dash { width: 36px; height: 12px; margin: 0 4px 0 1px; background: #d4d8c8; }
.thick { width: 24px; height: 11px; margin: 0 1px; background: #d4d8c8; border: solid #aaa; border-width: 1px 0 0 1px; }
.watermark { position: absolute; right: 8px; top: -3px; color: #fff; opacity: .85; font: 16px/18px "Noto Sans CJK SC", sans-serif; white-space: nowrap; pointer-events: none; }
</style>
